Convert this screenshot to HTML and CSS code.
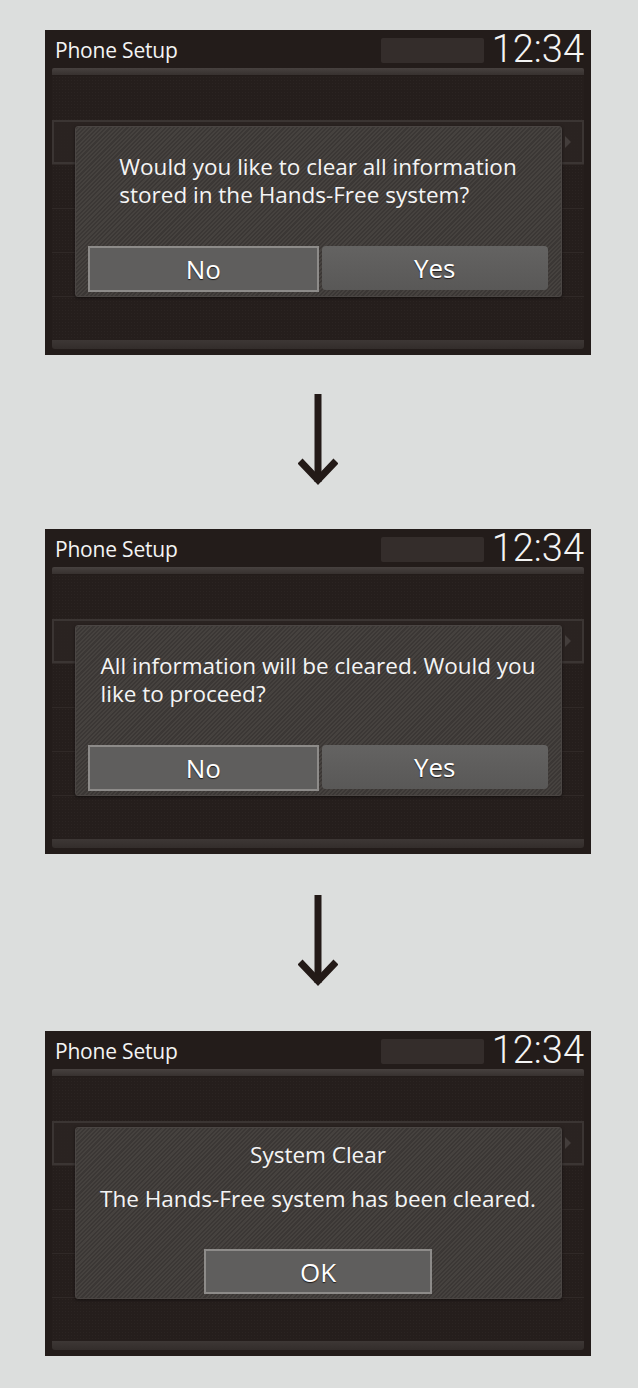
FILE: index.html
```html
<!DOCTYPE html>
<html lang="en">
<head>
  <meta charset="UTF-8">
  <title>Phone Setup - System Clear</title>
  <link rel="stylesheet" href="styles.css">
</head>
<body>
  <div class="page">

    <div class="screen">
      <div class="topbar">
        <span class="title">Phone Setup</span>
        <span class="status"></span>
        <span class="clock">12:34</span>
      </div>
      <div class="strip"></div>
      <div class="list">
        <div class="row first"></div>
        <div class="row sel"><i class="tri"></i></div>
        <div class="row"></div>
        <div class="row"></div>
        <div class="row"></div>
        <div class="row"></div>
      </div>
      <div class="bstrip"></div>
      <div class="dialog">
        <div class="msg">
          <p>Would you like to clear all information<br>stored in the Hands-Free system?</p>
        </div>
        <div class="btns">
          <div class="btn focus">No</div>
          <div class="btn">Yes</div>
        </div>
      </div>
    </div>

    <div class="arrow">
      <svg width="40" height="92" viewBox="0 0 40 92">
        <path d="M20 0 V88" stroke="#231a17" stroke-width="7" fill="none"/>
        <path d="M2 67 L20 86 L38 67" stroke="#231a17" stroke-width="7" fill="none"/>
      </svg>
    </div>

    <div class="screen">
      <div class="topbar">
        <span class="title">Phone Setup</span>
        <span class="status"></span>
        <span class="clock">12:34</span>
      </div>
      <div class="strip"></div>
      <div class="list">
        <div class="row first"></div>
        <div class="row sel"><i class="tri"></i></div>
        <div class="row"></div>
        <div class="row"></div>
        <div class="row"></div>
        <div class="row"></div>
      </div>
      <div class="bstrip"></div>
      <div class="dialog">
        <div class="msg">
          <p>All information will be cleared. Would you<br>like to proceed?</p>
        </div>
        <div class="btns">
          <div class="btn focus">No</div>
          <div class="btn">Yes</div>
        </div>
      </div>
    </div>

    <div class="arrow second">
      <svg width="40" height="92" viewBox="0 0 40 92">
        <path d="M20 0 V88" stroke="#231a17" stroke-width="7" fill="none"/>
        <path d="M2 67 L20 86 L38 67" stroke="#231a17" stroke-width="7" fill="none"/>
      </svg>
    </div>

    <div class="screen">
      <div class="topbar">
        <span class="title">Phone Setup</span>
        <span class="status"></span>
        <span class="clock">12:34</span>
      </div>
      <div class="strip"></div>
      <div class="list">
        <div class="row first"></div>
        <div class="row sel"><i class="tri"></i></div>
        <div class="row"></div>
        <div class="row"></div>
        <div class="row"></div>
        <div class="row"></div>
      </div>
      <div class="bstrip"></div>
      <div class="dialog notice">
        <div class="head">System Clear</div>
        <div class="note">The Hands-Free system has been cleared.</div>
        <div class="btns center">
          <div class="btn focus ok">OK</div>
        </div>
      </div>
    </div>

  </div>
</body>
</html>
```
FILE: styles.css
```css
body {
  margin: 0;
  background: #dcdedd;
  font-family: "Open Sans", "Noto Sans", sans-serif;
}
.page {
  width: 546px;
  margin-left: 45px;
  padding-top: 30px;
  display: flex;
  flex-direction: column;
}
.screen {
  position: relative;
  height: 325px;
  padding: 0 7px;
  box-sizing: border-box;
  background: #231c1a;
  display: flex;
  flex-direction: column;
}
.topbar {
  height: 38px;
  display: flex;
  align-items: flex-start;
}
.title {
  color: #f4f4f4;
  font-size: 21px;
  letter-spacing: -0.2px;
  line-height: 30px;
  margin: 5px 0 0 3px;
}
.status {
  margin-left: auto;
  margin-top: 8px;
  width: 103px;
  height: 25px;
  background: #342d2b;
  border-radius: 2px;
}
.clock {
  font-family: Roboto, "Liberation Sans", sans-serif;
  font-weight: 300;
  font-size: 38px;
  line-height: 38px;
  color: #f4f4f4;
  margin-left: 8px;
}
.strip {
  height: 7px;
  background: linear-gradient(#47413f, #37312f);
  border-radius: 2px 2px 0 0;
}
.list {
  margin-top: 1px;
  display: flex;
  flex-direction: column;
}
.row {
  height: 44px;
  box-sizing: border-box;
  border-top: 1px solid #302927;
  background-color: #251e1c;
  background-image: radial-gradient(#2b2422 0.7px, transparent 1px);
  background-size: 3px 3px;
}
.row.first {
  border-top: none;
}
.row.sel {
  border: 2px solid #3b3533;
  background-color: #2a2321;
  display: flex;
  align-items: center;
  justify-content: flex-end;
  padding-right: 11px;
}
.tri {
  width: 0;
  height: 0;
  border-left: 6px solid #433d3b;
  border-top: 6px solid transparent;
  border-bottom: 6px solid transparent;
}
.bstrip {
  height: 9px;
  background: linear-gradient(#3d3735, #332d2b);
  border-radius: 0 0 3px 3px;
}

/* popup over the list */
.dialog {
  position: absolute;
  left: 30px;
  top: 96px;
  width: 487px;
  height: 171px;
  box-sizing: border-box;
  border: 1px solid #4a4543;
  border-radius: 3px;
  background: repeating-linear-gradient(135deg, #3b3735 0 1.5px, #46423f 1.5px 3px);
  box-shadow: 0 1px 3px rgba(0,0,0,0.5);
  display: flex;
  flex-direction: column;
  padding: 0 13px 4px 12px;
  color: #f4f4f4;
  font-size: 22.5px;
  line-height: 28px;
}
.msg {
  display: flex;
  justify-content: center;
  padding-top: 26px;
}
.msg p {
  margin: 0;
  text-align: left;
}
.btns {
  margin-top: auto;
  display: flex;
  gap: 3px;
}
.btn {
  flex: 1;
  height: 44px;
  display: flex;
  align-items: center;
  justify-content: center;
  background: linear-gradient(#646362, #595857);
  border-radius: 4px;
  color: #fff;
  font-size: 26px;
  text-shadow: 0 1px 1px #1e1a19;
}
.btn.focus {
  height: 46px;
  box-sizing: border-box;
  border: 2px solid #8d8b89;
  border-radius: 0;
  background: #5f5e5d;
}
.dialog.notice {
  height: 172px;
  text-align: center;
}
.head {
  margin-top: 13px;
}
.note {
  margin-top: 16px;
}
.btns.center {
  justify-content: center;
}
.btn.ok {
  flex: 0 0 228px;
  height: 45px;
}
.arrow {
  height: 174px;
  display: flex;
  justify-content: center;
  align-items: flex-start;
  padding-top: 39px;
  box-sizing: border-box;
}
.arrow.second {
  height: 177px;
  padding-top: 41px;
}
```
